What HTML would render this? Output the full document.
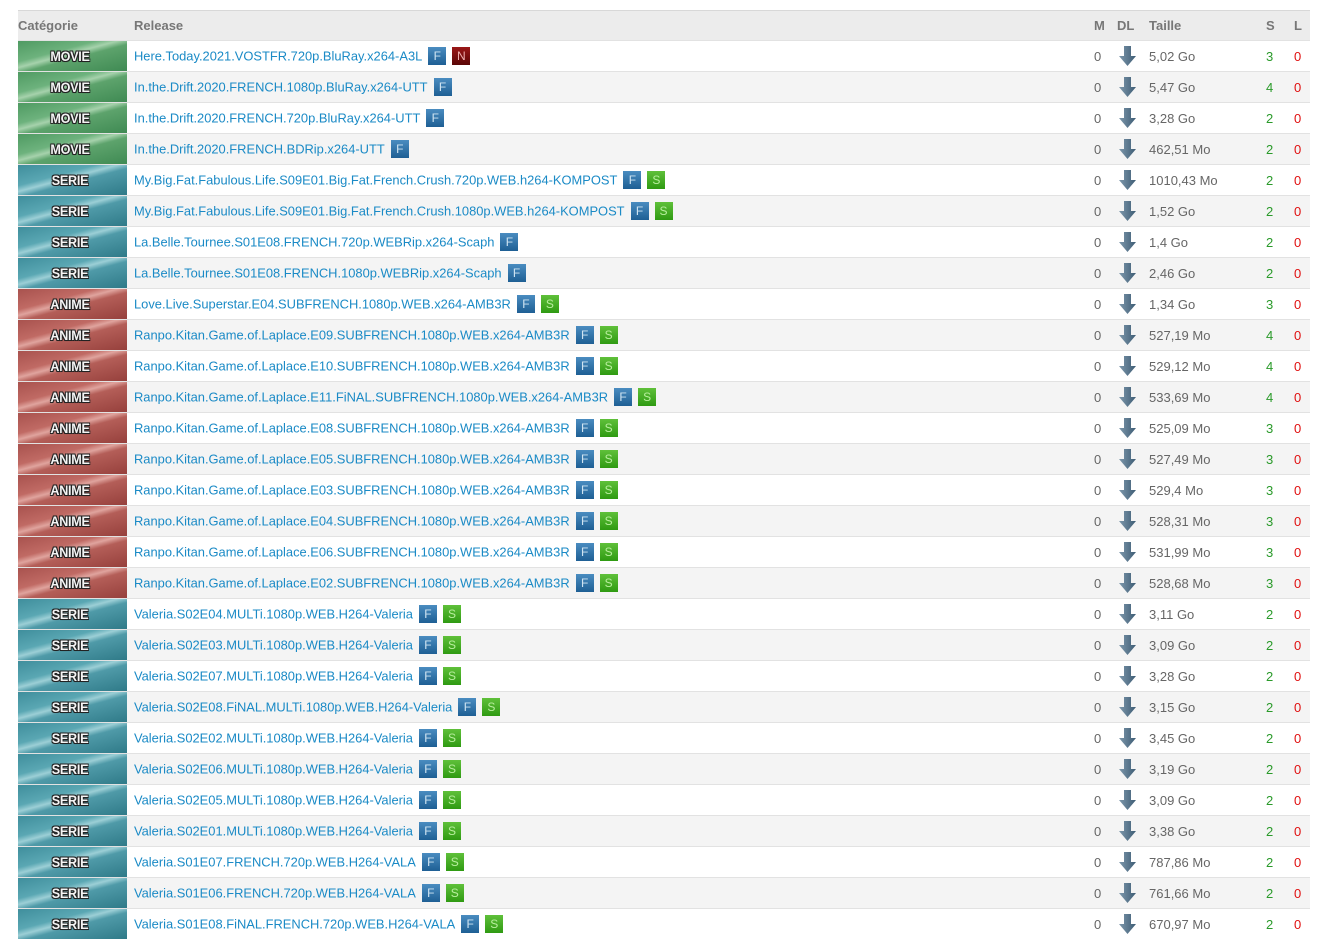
<!DOCTYPE html>
<html><head><meta charset="utf-8">
<style>
body{margin:0;background:#fff;font-family:"Liberation Sans",Arial,sans-serif;font-size:13px;color:#666;}
table{position:absolute;left:18px;top:10px;width:1292px;border-collapse:collapse;table-layout:fixed;}
thead tr{height:30px;background:#ececec;border-top:1px solid #d8d8d8;}
th{font-weight:bold;color:#777;text-align:left;font-size:13px;padding:0;}
tbody tr{height:31px;border-top:1px solid #e2e2e2;}
tbody tr:nth-child(even){background:#f4f4f4;}
td{padding:0;white-space:nowrap;vertical-align:middle;}
.cat{width:109px;height:30px;position:relative;overflow:hidden;}
.cat span{position:absolute;left:0;width:104px;top:7px;text-align:center;color:#f4f4f4;font-weight:bold;font-size:14px;letter-spacing:-0.3px;text-shadow:-1px -1px 0 #222,1px -1px 0 #222,-1px 1px 0 #222,1px 1px 0 #222,0 0 2px #000;transform:scaleX(0.9);}
.movie{background:linear-gradient(165deg,#4f9a62 0%,#6db27d 35%,#a6d2ac 45%,#5da36c 55%,#3f8a53 100%);}
.serie{background:linear-gradient(165deg,#3f8e9c 0%,#5aa7b3 35%,#9ccfd6 45%,#4f9aa8 55%,#2f7a88 100%);}
.anime{background:linear-gradient(165deg,#a8524e 0%,#c06a64 35%,#e0a49e 45%,#b45e58 55%,#96403c 100%);}
a{color:#1a8ac6;text-decoration:none;font-size:12.9px;vertical-align:middle;}
.b{display:inline-block;width:18px;height:18px;vertical-align:middle;margin-left:6px;color:#cfe4f2;font-size:12px;text-align:center;line-height:18px;}
.F{background:linear-gradient(#4a8cc0,#1e5f94);}
.S{background:linear-gradient(#5fc03a,#2f9a12);color:#b8ee9e;}
.N{background:linear-gradient(#9a1818,#5a0606);color:#f0b0b0;}
.s{color:#2a9a2a;}
.l{color:#e01010;}
</style></head><body>
<table>
<colgroup><col style="width:116px"><col style="width:960px"><col style="width:23px"><col style="width:32px"><col style="width:117px"><col style="width:28px"><col style="width:16px"></colgroup>
<thead><tr><th>Catégorie</th><th>Release</th><th>M</th><th>DL</th><th>Taille</th><th>S</th><th>L</th></tr></thead>
<tbody id="tb"></tbody>
</table>
<script>
var d=[
["movie","Here.Today.2021.VOSTFR.720p.BluRay.x264-A3L","FN","5,02 Go",3],
["movie","In.the.Drift.2020.FRENCH.1080p.BluRay.x264-UTT","F","5,47 Go",4],
["movie","In.the.Drift.2020.FRENCH.720p.BluRay.x264-UTT","F","3,28 Go",2],
["movie","In.the.Drift.2020.FRENCH.BDRip.x264-UTT","F","462,51 Mo",2],
["serie","My.Big.Fat.Fabulous.Life.S09E01.Big.Fat.French.Crush.720p.WEB.h264-KOMPOST","FS","1010,43 Mo",2],
["serie","My.Big.Fat.Fabulous.Life.S09E01.Big.Fat.French.Crush.1080p.WEB.h264-KOMPOST","FS","1,52 Go",2],
["serie","La.Belle.Tournee.S01E08.FRENCH.720p.WEBRip.x264-Scaph","F","1,4 Go",2],
["serie","La.Belle.Tournee.S01E08.FRENCH.1080p.WEBRip.x264-Scaph","F","2,46 Go",2],
["anime","Love.Live.Superstar.E04.SUBFRENCH.1080p.WEB.x264-AMB3R","FS","1,34 Go",3],
["anime","Ranpo.Kitan.Game.of.Laplace.E09.SUBFRENCH.1080p.WEB.x264-AMB3R","FS","527,19 Mo",4],
["anime","Ranpo.Kitan.Game.of.Laplace.E10.SUBFRENCH.1080p.WEB.x264-AMB3R","FS","529,12 Mo",4],
["anime","Ranpo.Kitan.Game.of.Laplace.E11.FiNAL.SUBFRENCH.1080p.WEB.x264-AMB3R","FS","533,69 Mo",4],
["anime","Ranpo.Kitan.Game.of.Laplace.E08.SUBFRENCH.1080p.WEB.x264-AMB3R","FS","525,09 Mo",3],
["anime","Ranpo.Kitan.Game.of.Laplace.E05.SUBFRENCH.1080p.WEB.x264-AMB3R","FS","527,49 Mo",3],
["anime","Ranpo.Kitan.Game.of.Laplace.E03.SUBFRENCH.1080p.WEB.x264-AMB3R","FS","529,4 Mo",3],
["anime","Ranpo.Kitan.Game.of.Laplace.E04.SUBFRENCH.1080p.WEB.x264-AMB3R","FS","528,31 Mo",3],
["anime","Ranpo.Kitan.Game.of.Laplace.E06.SUBFRENCH.1080p.WEB.x264-AMB3R","FS","531,99 Mo",3],
["anime","Ranpo.Kitan.Game.of.Laplace.E02.SUBFRENCH.1080p.WEB.x264-AMB3R","FS","528,68 Mo",3],
["serie","Valeria.S02E04.MULTi.1080p.WEB.H264-Valeria","FS","3,11 Go",2],
["serie","Valeria.S02E03.MULTi.1080p.WEB.H264-Valeria","FS","3,09 Go",2],
["serie","Valeria.S02E07.MULTi.1080p.WEB.H264-Valeria","FS","3,28 Go",2],
["serie","Valeria.S02E08.FiNAL.MULTi.1080p.WEB.H264-Valeria","FS","3,15 Go",2],
["serie","Valeria.S02E02.MULTi.1080p.WEB.H264-Valeria","FS","3,45 Go",2],
["serie","Valeria.S02E06.MULTi.1080p.WEB.H264-Valeria","FS","3,19 Go",2],
["serie","Valeria.S02E05.MULTi.1080p.WEB.H264-Valeria","FS","3,09 Go",2],
["serie","Valeria.S02E01.MULTi.1080p.WEB.H264-Valeria","FS","3,38 Go",2],
["serie","Valeria.S01E07.FRENCH.720p.WEB.H264-VALA","FS","787,86 Mo",2],
["serie","Valeria.S01E06.FRENCH.720p.WEB.H264-VALA","FS","761,66 Mo",2],
["serie","Valeria.S01E08.FiNAL.FRENCH.720p.WEB.H264-VALA","FS","670,97 Mo",2]];
var arrow='<svg width="17" height="20" viewBox="0 0 17 20" style="vertical-align:middle;margin-left:2px"><defs><linearGradient id="g" x1="0" x2="1"><stop offset="0" stop-color="#7e98ac"/><stop offset="1" stop-color="#3d5c74"/></linearGradient></defs><path d="M5 0h7v10h5l-8.5 10L0 10h5z" fill="url(#g)"/></svg>';
var h='';
d.forEach(function(r){
 var b='';for(var c of r[2])b+='<span class="b '+c+'">'+c+'</span>';
 h+='<tr><td><div class="cat '+r[0]+'"><span>'+r[0].toUpperCase()+'</span></div></td><td><a>'+r[1]+'</a>'+b+'</td><td>0</td><td>'+arrow+'</td><td>'+r[3]+'</td><td class="s">'+r[4]+'</td><td class="l">0</td></tr>';
});
document.getElementById('tb').innerHTML=h;
</script>
</body></html>
